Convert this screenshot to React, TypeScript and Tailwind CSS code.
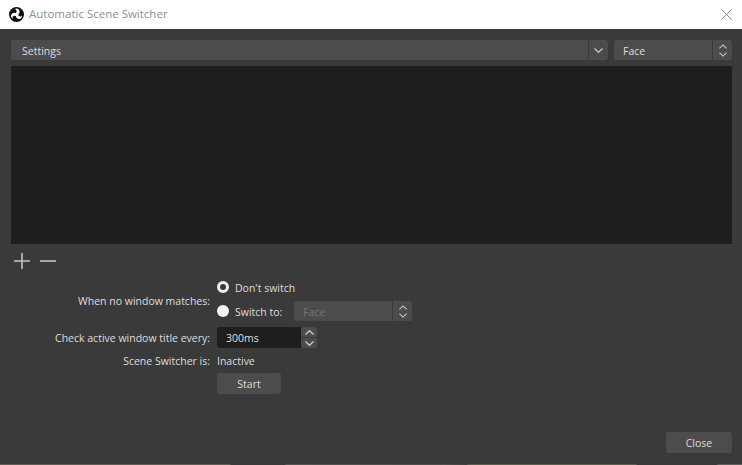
function Chevron({ up = false, className = "" }: { up?: boolean; className?: string }) {
  return (
    <svg width="9" height="5" viewBox="0 0 9 5" fill="none" stroke="currentColor" strokeWidth="1.2" className={className}>
      <path d={up ? "M0.5 4.5 L4.5 0.7 L8.5 4.5" : "M0.5 0.5 L4.5 4.3 L8.5 0.5"} />
    </svg>
  );
}

function UpDown() {
  return (
    <div className="flex w-[20px] flex-col items-center justify-center gap-[3px] border-l border-[#3a3a3a] text-[#c8c8c8]">
      <Chevron up className="w-[8px]" />
      <Chevron className="w-[8px]" />
    </div>
  );
}

function Radio({ checked }: { checked?: boolean }) {
  return (
    <div
      className={
        checked
          ? "h-[12px] w-[12px] rounded-full border-[3px] border-[#eeeeee] bg-[#3a3a3a]"
          : "h-[12px] w-[12px] rounded-full bg-[#f2f2f2]"
      }
    />
  );
}

function ObsLogo() {
  const blade = "M7.5 1.6 A3.1 3.1 0 1 1 4.9 6.4 A2.3 2.3 0 0 0 7.5 3.4 A1.8 1.8 0 0 0 5.6 2.3 A3 3 0 0 1 7.5 1.6 Z";
  return (
    <svg width="15" height="15" viewBox="0 0 15 15">
      <circle cx="7.5" cy="7.5" r="7.5" fill="#111111" />
      <path d={blade} fill="#ffffff" />
      <path d={blade} fill="#ffffff" transform="rotate(120 7.5 7.5)" />
      <path d={blade} fill="#ffffff" transform="rotate(240 7.5 7.5)" />
    </svg>
  );
}

export default function App() {
  return (
    <div className="flex h-[465px] w-[742px] flex-col overflow-hidden bg-[#3a3a3a] text-[10.5px] leading-[18px] text-[#dedede] [font-family:'Open_Sans','Noto_Sans',sans-serif]">
      <div className="flex h-[29px] shrink-0 items-center bg-white pl-[9px] pr-[12px]">
        <ObsLogo />
        <span className="ml-[5px] pb-px text-[11.5px] text-[#8f8f8f]">Automatic Scene Switcher</span>
        <svg width="11" height="11" viewBox="0 0 11 11" stroke="#707070" strokeWidth="0.8" className="ml-auto mr-[-2px]">
          <path d="M0.5 0.5 L10.5 10.5 M10.5 0.5 L0.5 10.5" />
        </svg>
      </div>

      <div className="flex min-h-0 flex-1 flex-col px-[10px] pb-[11px] pl-[11px] pt-[11px]">
        <div className="flex h-[20px] gap-[6px]">
          <div className="flex flex-1 rounded-[3px] bg-[#4c4c4c]">
            <div className="flex flex-1 items-center pl-[11px] pt-[2px]">Settings</div>
            <div className="flex w-[20px] items-center justify-center border-l border-[#3a3a3a] text-[#c8c8c8]">
              <Chevron />
            </div>
          </div>
          <div className="flex w-[118px] rounded-[3px] bg-[#4c4c4c]">
            <div className="flex flex-1 items-center pl-[9px] pt-[2px]">Face</div>
            <UpDown />
          </div>
        </div>

        <div className="mt-[6px] h-[178px] bg-[#1e1e1e]" />

        <div className="ml-[3px] mt-[9px] flex h-[16px] items-center gap-[10px] text-[#c4c4c4]">
          <svg width="16" height="16" viewBox="0 0 16 16" stroke="currentColor" strokeWidth="1.6">
            <path d="M0 8 H16 M8 0 V16" />
          </svg>
          <svg width="16" height="16" viewBox="0 0 16 16" stroke="currentColor" strokeWidth="1.6">
            <path d="M0 8 H16" />
          </svg>
        </div>

        <div className="mt-[10px] grid grid-cols-[200px_1fr] items-center gap-x-[6px]">
          <div className="pr-px pt-px text-right">When no window matches:</div>
          <div className="flex flex-col">
            <div className="flex h-[16px] items-center gap-[6px]">
              <Radio checked />
              <span className="pt-px">Don't switch</span>
            </div>
            <div className="mt-[6px] flex h-[20px] items-center">
              <Radio />
              <span className="ml-[6px] w-[59px] pt-px">Switch to:</span>
              <div className="flex h-[20px] w-[118px] rounded-[3px] bg-[#4c4c4c]">
                <div className="flex flex-1 items-center pl-[9px] pt-[2px] text-[#757575]">Face</div>
                <UpDown />
              </div>
            </div>
          </div>

          <div className="mt-[6px] pr-px text-right">Check active window title every:</div>
          <div className="mt-[6px] flex h-[21px]">
            <div className="flex w-[84px] items-center rounded-l-[3px] bg-[#1e1e1e] pl-[9px]">300ms</div>
            <div className="flex w-[16px] flex-col gap-px overflow-hidden rounded-[3px] text-[#d0d0d0]">
              <div className="flex flex-1 items-center justify-center bg-[#4c4c4c]">
                <Chevron up />
              </div>
              <div className="flex flex-1 items-center justify-center bg-[#4c4c4c]">
                <Chevron />
              </div>
            </div>
          </div>

          <div className="mt-[4px] pr-px text-right">Scene Switcher is:</div>
          <div className="mt-[4px]">Inactive</div>

          <div />
          <button className="mt-[3px] h-[21px] w-[64px] rounded-[3px] bg-[#4c4c4c] pt-px">Start</button>
        </div>

        <div className="mt-auto flex justify-end">
          <button className="h-[21px] w-[66px] rounded-[3px] bg-[#4c4c4c] pt-px">Close</button>
        </div>
      </div>

      <div className="h-px shrink-0 bg-[linear-gradient(90deg,#5f5c54_0,#5f5c54_230px,#3a3a3a_231px,#3a3a3a_285px,#55554f_286px,#4c4c48_446px,#3f3f3d_467px,#5a5a4e_468px,#5a5a4e_636px,#3a3a3a_637px,#3a3a3a_717px,#5f5f5a_718px)]" />
    </div>
  );
}
